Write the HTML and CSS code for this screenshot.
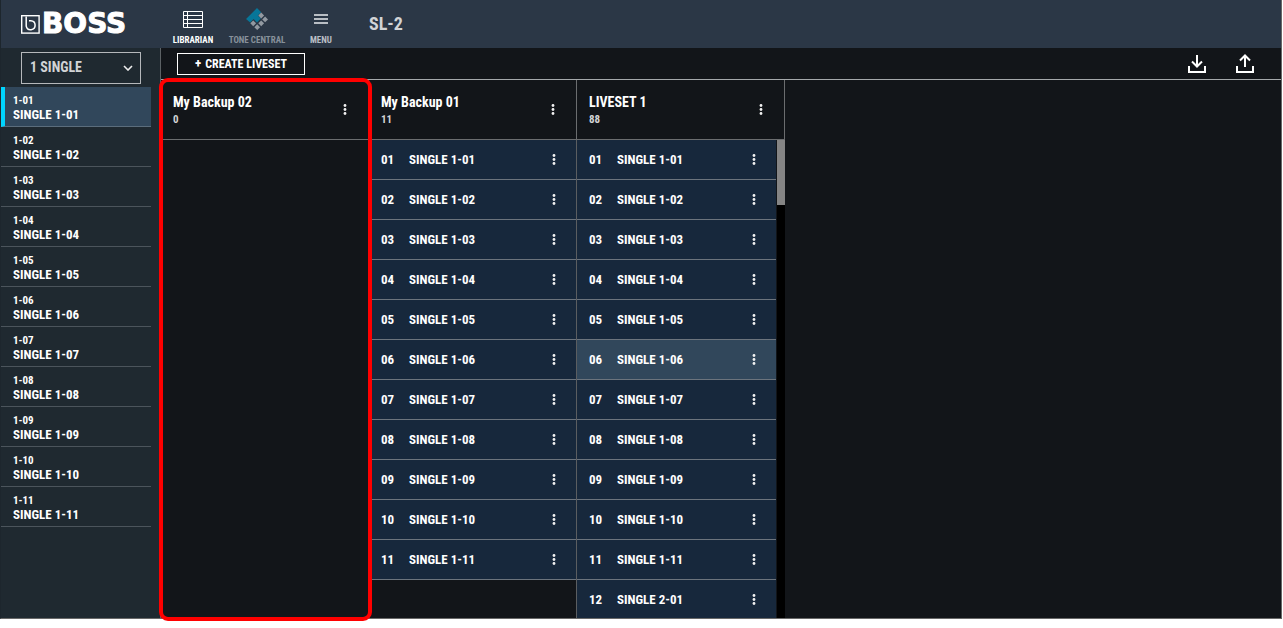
FILE: index.html
```html
<!DOCTYPE html>
<html lang="en">
<head>
<meta charset="utf-8">
<title>SL-2 Librarian</title>
<link rel="stylesheet" href="styles.css">
</head>
<body>
<div class="window">
  <header class="topbar">
    <div class="brand">
      <svg class="brand-mark" viewBox="0 0 19 19" width="19" height="19" aria-hidden="true">
        <rect x="0.7" y="0.7" width="17.4" height="17.4" fill="none" stroke="#fff" stroke-width="1.4"/>
        <path d="M5.200 1.500v9.600a4.500 4.500 0 1 0 4.600-5.400H8" fill="none" stroke="#fff" stroke-width="1.500"/>
      </svg>
      <span class="brand-name">BOSS</span>
    </div>
    <nav class="nav">
      <button class="nav-item active" type="button">
        <svg width="22" height="22" viewBox="0 0 22 22" fill="none" stroke="currentColor" aria-hidden="true"><path d="M1.500 3.500h19v16h-19zM5.500 3.500v16M1.500 7.500h19M1.500 11.500h19M1.500 15.500h19"/></svg>
        <span>LIBRARIAN</span>
      </button>
      <button class="nav-item dim" type="button">
        <svg width="22" height="22" viewBox="0 0 22 22" aria-hidden="true"><path fill="#077699" d="M11 0l4.200 4.200-3.400 3.400 3 3-3.800 3.800-3.400-3.400-3.400 3.400L0 11z"/><path fill="#9299a1" d="M15.200 4.600l2.900 2.900-2.900 2.900-2.900-2.900zM19.100 8.500l2.900 2.900-2.900 2.900-2.900-2.900zM15.200 12.400l2.900 2.900-2.900 2.900-2.900-2.900zM7.200 12.400l2.900 2.900-2.900 2.900-2.900-2.900zM11.200 16.300l2.900 2.900-2.900 2.800-2.900-2.800z"/></svg>
        <span>TONE CENTRAL</span>
      </button>
      <button class="nav-item menu" type="button">
        <svg width="22" height="22" viewBox="0 0 22 22" fill="currentColor" aria-hidden="true"><path d="M4 6h14v2H4zM4 10h14v2H4zM4 14h14v2H4z"/></svg>
        <span>MENU</span>
      </button>
    </nav>
    <h1 class="device">SL-2</h1>
  </header>
  <div class="workspace">
    <aside class="sidebar">
      <div class="picker">
        <select aria-label="Bank"><option>1 SINGLE</option></select>
        <svg width="10" height="6" viewBox="0 0 10 6" aria-hidden="true"><path d="M1 1l4 4 4-4" fill="none" stroke="#eee" stroke-width="1.600"/></svg>
      </div>
      <ul class="patches" id="patches"></ul>
    </aside>
    <main class="main">
      <div class="toolbar">
        <button class="create" type="button"><span class="plus">+</span><span>CREATE LIVESET</span></button>
        <div class="transfer">
          <button type="button" aria-label="Import"><svg width="20" height="20" viewBox="0 0 20 20" fill="none" stroke="#fff" stroke-width="2" aria-hidden="true"><path d="M2 12v6h16v-6M10 1v11M5 7.500l5 5 5-5"/></svg></button>
          <button type="button" aria-label="Export"><svg width="20" height="20" viewBox="0 0 20 20" fill="none" stroke="#fff" stroke-width="2" aria-hidden="true"><path d="M2 12v6h16v-6M10 13V2M5 6.500l5-5 5 5"/></svg></button>
        </div>
      </div>
      <div class="livesets" id="livesets"></div>
    </main>
  </div>
</div>
<script src="app.js"></script>
</body>
</html>
```
FILE: app.js
```js
const pad = n => String(n).padStart(2, "0");
const dots = label => `<button class="more" type="button" aria-label="${label}"><svg width="4" height="12" viewBox="0 0 4 12" fill="#f2f2f2" aria-hidden="true"><circle cx="2" cy="1.500" r="1.400"/><circle cx="2" cy="5.500" r="1.400"/><circle cx="2" cy="9.500" r="1.400"/></svg></button>`;
const names = Array.from({ length: 12 }, (_, i) => i < 11 ? `SINGLE 1-${pad(i + 1)}` : "SINGLE 2-01");

document.getElementById("patches").innerHTML = names.slice(0, 11).map((name, i) =>
  `<li class="patch${i === 0 ? " selected" : ""}"><span class="patch-no">1-${pad(i + 1)}</span><span class="patch-name">${name}</span></li>`).join("");

const sets = [
  { title: "My Backup 02", count: 0, shown: 0, marked: true },
  { title: "My Backup 01", count: 11, shown: 11 },
  { title: "LIVESET 1", count: 88, shown: 12, current: 5, scroll: true }
];

document.getElementById("livesets").innerHTML = sets.map(s => `
  <section class="liveset${s.marked ? " marked" : ""}">
    <header class="liveset-head"><div><h2>${s.title}</h2><p>${s.count}</p></div>${dots("Liveset options")}</header>
    <div class="liveset-body${s.scroll ? " scrolls" : ""}">
      <ol class="rows">${names.slice(0, s.shown).map((name, i) =>
        `<li class="row${i === s.current ? " current" : ""}"><span class="row-no">${pad(i + 1)}</span><span class="row-name">${name}</span>${dots("Patch options")}</li>`).join("")}</ol>
      ${s.scroll ? '<div class="track"><div class="thumb"></div></div>' : ""}
    </div>
  </section>`).join("");
```
FILE: styles.css
```css
* { box-sizing: border-box; margin: 0; padding: 0; }
body {
  height: 100vh;
  padding: 0 1px 9px 0;
  background: #fff;
  color: #fff;
  font-family: "Roboto Condensed", "Liberation Sans Narrow", Roboto, sans-serif;
  font-weight: 700;
  display: flex;
  overflow: hidden;
}
button, select { font: inherit; color: inherit; background: none; border: 0; }
ul, ol { list-style: none; }
svg { display: block; }
.window {
  flex: 1;
  min-width: 0;
  display: flex;
  flex-direction: column;
  background: #121519;
  border: 1px solid #696969;
  border-top: 0;
  border-left-color: #1d262d;
}
.topbar { height: 48px; flex: none; display: flex; align-items: center; background: #2b3746; }
.brand { width: 160px; flex: none; padding-left: 20px; display: flex; align-items: center; gap: 2px; }
.brand-name {
  font: 700 28px/24px "DejaVu Sans", sans-serif;
  -webkit-text-stroke: 1px #fff;
}
.nav { display: flex; height: 100%; }
.nav-item {
  width: 64px;
  display: flex;
  flex-direction: column;
  align-items: center;
  padding-top: 8px;
  gap: 4px;
  font-size: 9px;
  line-height: 12px;
  white-space: nowrap;
  color: #b9bec4;
}
.nav-item.active { color: #fff; }
.nav-item.dim { color: #87909a; }
.device { padding-left: 16px; font-size: 18px; line-height: 24px; color: #d2d4d6; }
.workspace { flex: 1; min-height: 0; display: flex; }
.sidebar { width: 159px; flex: none; background: #1f2930; }
.picker {
  display: grid;
  align-items: center;
  width: 120px;
  height: 32px;
  margin: 4px 0 3px 20px;
  border: 1px solid #b5b8bb;
}
.picker select {
  grid-area: 1 / 1;
  appearance: none;
  width: 100%;
  height: 100%;
  padding: 0 8px 2px;
  font-size: 14px;
  color: #d2d4d6;
}
.picker svg { grid-area: 1 / 1; justify-self: end; margin-right: 7px; pointer-events: none; }
.patch {
  width: 150px;
  height: 40px;
  padding: 7px 0 0 12px;
  border-bottom: 1px solid #4b545b;
  display: flex;
  flex-direction: column;
}
.patch.selected { background: #31475b; padding-left: 8px; border-left: 4px solid #00d5ff; border-bottom-color: #5b6d7c; }
.patch-no { font-size: 11px; line-height: 13px; }
.patch-name { font-size: 13px; line-height: 15px; }
.main { flex: 1; min-width: 0; display: flex; flex-direction: column; border-left: 1px solid #5c6164; }
.toolbar {
  height: 32px;
  flex: none;
  padding: 0 26px 0 16px;
  display: flex;
  align-items: center;
  justify-content: space-between;
  border-bottom: 1px solid #a5a9ab;
}
.create {
  width: 128px;
  height: 22px;
  display: flex;
  align-items: center;
  justify-content: center;
  gap: 4px;
  border: 1px solid #fff;
  font-size: 12px;
  line-height: 20px;
}
.plus { font-size: 13px; }
.transfer { display: flex; gap: 28px; }
.livesets { flex: 1; min-height: 0; display: flex; }
.liveset { position: relative; width: 208px; display: flex; flex-direction: column; min-height: 0; }
.marked::after {
  content: "";
  position: absolute;
  inset: -2px -3px -3px -2px;
  border: 4px solid #f00;
  border-radius: 9px;
  z-index: 1;
  pointer-events: none;
}
.liveset-head {
  height: 60px;
  flex: none;
  padding: 1px 21px 0 12px;
  display: flex;
  align-items: center;
  justify-content: space-between;
  border-right: 1px solid #6b6d6f;
  border-bottom: 1px solid #6b6d6f;
}
.liveset h2 { font-size: 14px; line-height: 18px; }
.liveset p { font-size: 11px; line-height: 17px; color: #d2d4d6; }
.liveset-body { flex: 1; min-height: 0; display: flex; overflow: hidden; border-right: 1px solid #5b5e61; }
.scrolls { border-right: 0; gap: 1px; }
.rows { flex: 1; }
.row {
  height: 40px;
  padding: 0 20px 0 12px;
  display: flex;
  align-items: center;
  background: #17283c;
  border-bottom: 1px solid #6c747d;
  font-size: 13px;
}
.row.current { background: #31475b; }
.row-no { width: 28px; }
.row-name { flex: 1; }
.more { padding: 0; }
.track { width: 8px; background: #000; }
.thumb { height: 65px; background: #858585; }
```
